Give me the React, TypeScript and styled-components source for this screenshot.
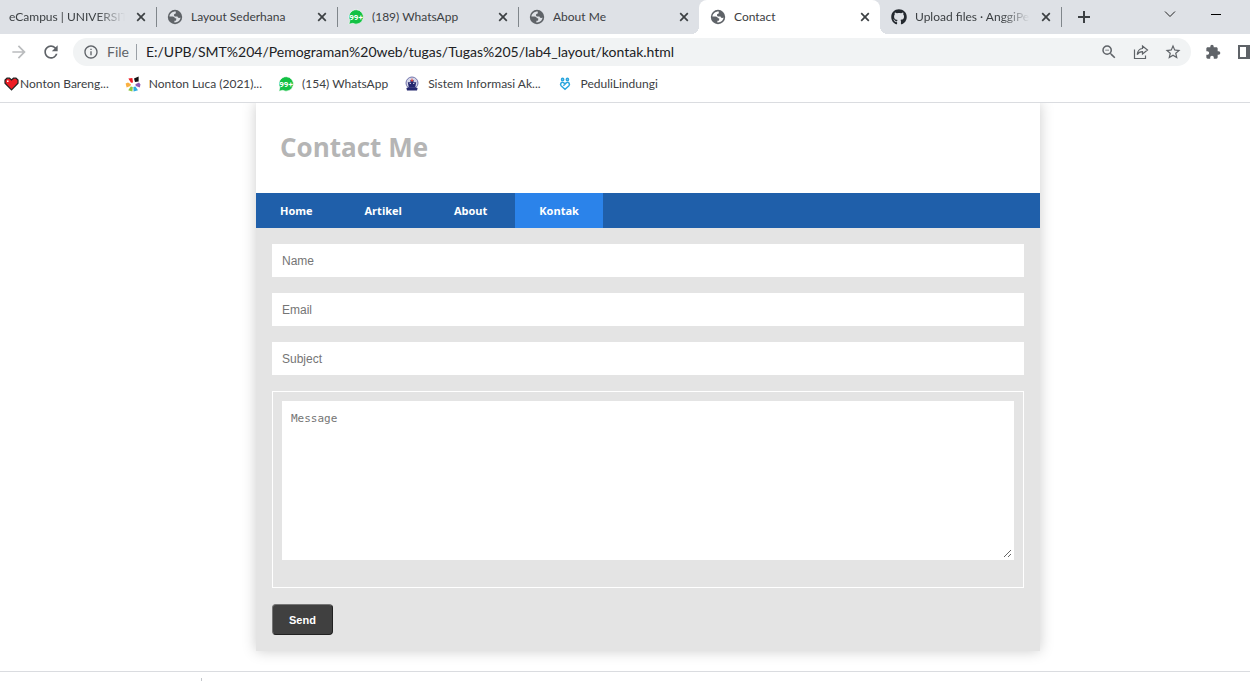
import React from "react";
import styled, { createGlobalStyle } from "styled-components";
import { MdRefresh, MdArrowForward, MdInfoOutline, MdExtension, MdStarBorder, MdZoomOut } from "react-icons/md";
import { FaGithub } from "react-icons/fa";

const siteFont = `"Open Sans", "Noto Sans", sans-serif`;
const chromeFont = `Lato, "Open Sans", sans-serif`;

const GlobalStyle = createGlobalStyle`
  * { box-sizing: border-box; }
  body { margin: 0; background: #fff; font-family: ${siteFont}; }
  button, input, textarea { margin: 0; }
`;

const Page = styled.div`
  min-height: 100vh;
  display: flex;
  flex-direction: column;
  overflow: hidden;
`;

const Chrome = styled.div`
  background: #fff;
  border-bottom: 1px solid #dadce0;
  font-family: ${chromeFont};
  font-size: 12px;
  color: #3c4043;
`;

const TabStrip = styled.div`
  display: flex;
  height: 34px;
  background: #dee1e6;
`;

const Tab = styled.div<{ $active?: boolean; $first?: boolean }>`
  position: relative;
  display: flex;
  align-items: center;
  gap: 8px;
  flex: 0 1 ${(p) => (p.$first ? 156 : 181)}px;
  min-width: 0;
  padding: 0 7px 0 ${(p) => (p.$first ? 9 : 11)}px;
  background: ${(p) => (p.$active ? "#fff" : "transparent")};
  border-radius: ${(p) => (p.$active ? "8px 8px 0 0" : "0")};
  &::before, &::after {
    content: "";
    display: ${(p) => (p.$active ? "block" : "none")};
    position: absolute;
    bottom: 0;
    width: 8px;
    height: 8px;
  }
  &::before { left: -8px; background: radial-gradient(circle at 0 0, transparent 8px, #fff 8px); }
  &::after { right: -8px; background: radial-gradient(circle at 100% 0, transparent 8px, #fff 8px); }
`;

const TabRule = styled.span`
  align-self: center;
  flex: none;
  width: 1px;
  height: 20px;
  margin-right: -1px;
  background: #80868b;
`;

const TabTitle = styled.span<{ $fade?: boolean }>`
  flex: 1;
  min-width: 0;
  overflow: hidden;
  white-space: nowrap;
  line-height: 18px;
  mask-image: ${(p) => (p.$fade ? "linear-gradient(to right, #000 75%, transparent)" : "none")};
`;

const IconButton = styled.button`
  display: flex;
  flex: none;
  align-items: center;
  justify-content: center;
  padding: 0;
  border: 0;
  background: none;
  color: #5f6368;
`;

const CloseButton = styled(IconButton)`
  width: 16px;
  height: 16px;
  color: #3c4043;
`;

const NewTab = styled(IconButton)`
  width: 28px;
  margin-left: 9px;
  color: #3c4043;
`;

const WindowControls = styled.div`
  display: flex;
  gap: 34px;
  margin-left: auto;
  padding: 8px 28px 0 0;
  align-items: flex-start;
`;

const Toolbar = styled.div`
  display: flex;
  align-items: center;
  height: 36px;
  padding-left: 9px;
  overflow: hidden;
`;

const NavButtons = styled.div`
  display: flex;
  flex: none;
  gap: 12px;
  width: 64px;
`;

const Omnibox = styled.div`
  display: flex;
  align-items: center;
  flex: 1;
  min-width: 0;
  height: 28px;
  padding: 0 9px 0 10px;
  border-radius: 14px;
  background: #f1f3f4;
  color: #5f6368;
`;

const Scheme = styled.span`
  margin-left: 8px;
  padding-right: 7px;
  border-right: 1px solid #9aa0a6;
  font-size: 14px;
  line-height: 16px;
`;

const UrlInput = styled.input`
  flex: 1;
  min-width: 0;
  padding: 0 0 0 9px;
  border: 0;
  outline: 0;
  background: none;
  color: #202124;
  font: 14px/20px ${chromeFont};
`;

const OmniActions = styled.div`
  display: flex;
  gap: 15px;
`;

const Extensions = styled.div`
  display: flex;
  flex: none;
  gap: 16px;
  width: 59px;
  padding-left: 14px;
`;

const Bookmarks = styled.nav`
  display: flex;
  align-items: center;
  gap: 16px;
  height: 32px;
  padding: 0 0 4px 4px;
`;

const Bookmark = styled.a<{ $tight?: boolean }>`
  display: flex;
  align-items: center;
  gap: ${(p) => (p.$tight ? 1 : 8)}px;
  color: #3c4043;
  line-height: 18px;
  text-decoration: none;
  white-space: nowrap;
`;

const Viewport = styled.main`
  flex: 1;
  padding: 0 0 20px 46px;
  overflow: hidden;
`;

const Container = styled.div`
  max-width: 784px;
  margin: 0 auto;
  background: #fff;
  box-shadow: 0 0 13px #ccc;
`;

const SiteHeader = styled.header`
  padding: 26px 24px 28px;
`;

const SiteTitle = styled.h1`
  margin: 0;
  color: #b5b5b5;
  font-size: 26px;
  line-height: 36px;
`;

const SiteNav = styled.nav`
  display: flex;
  gap: 4px;
  background: #1f5faa;
`;

const NavLink = styled.a<{ $active?: boolean }>`
  padding: 0 24px;
  background: ${(p) => (p.$active ? "#2b83ea" : "transparent")};
  color: #fff;
  font-size: 11px;
  font-weight: 700;
  line-height: 35px;
  text-decoration: none;
`;

const Form = styled.form`
  display: flex;
  flex-direction: column;
  gap: 16px;
  padding: 16px;
  background: #e4e4e4;
`;

const TextField = styled.input`
  width: 100%;
  height: 33px;
  padding: 0 9px;
  border: 1px solid #fff;
  background: #fff;
  font: 12px "Liberation Sans", Arial, sans-serif;
  &::placeholder { color: #757575; }
`;

const MessageFrame = styled.div`
  padding: 9px 9px 27px;
  border: 1px solid #fff;
`;

const MessageField = styled.textarea`
  display: block;
  width: 100%;
  height: 159px;
  padding: 8px 7px;
  border: 2px solid #fff;
  background: #fff;
  font: 11px/15px "DejaVu Sans Mono", monospace;
  &::placeholder { color: #757575; }
`;

const SendButton = styled.button`
  align-self: flex-start;
  height: 31px;
  padding: 0 16px;
  border: 1px solid;
  border-color: #767676 #212121 #212121 #767676;
  border-radius: 4px;
  background: #404040;
  color: #fff;
  font: bold 11px "Liberation Sans", Arial, sans-serif;
`;

const Shelf = styled.footer`
  height: 10px;
  padding: 6px 0 0 201px;
  border-top: 1px solid #dadce0;
`;

const ShelfRule = styled.div`
  width: 1px;
  height: 3px;
  background: #c4c7cb;
`;

const Globe = ({ land = "#dee1e6" }: { land?: string }) => (
  <svg width="16" height="16" viewBox="0 0 16 16" aria-hidden="true">
    <circle cx="8" cy="8" r="7.2" fill="#5f6368" />
    <path d="M8.8 2.4 C5.4 2.2 2.7 4.4 2.4 7.4 L5.6 7.5 Q7.7 7.6 7.9 9.2 H9.2 V10.9 Q9 11.8 7.4 11.8 V13.5 C10.8 13.8 13.4 11.2 13.5 8.6 Q12.6 9.4 11.4 8.8 Q10.6 8.3 10.5 7.4 H8 Q6.9 7.2 7 6 Q7 4.9 8.2 4.8 Q8.8 4.6 8.8 3.8 Z" fill={land} />
  </svg>
);

const WhatsApp = () => (
  <svg width="16" height="16" viewBox="0 0 16 16" aria-hidden="true">
    <path d="M8.2 .7a7.2 7.2 0 1 1-3.4 13.6L.9 15.2l1-3.8A7.2 7.2 0 0 1 8.2 .7z" fill="#12c144" stroke="#fff" strokeWidth="0.6" />
    <text x="8" y="11" textAnchor="middle" fontFamily="Liberation Sans Narrow, Roboto, sans-serif" fontSize="8" fontWeight="700" fill="#fff">99+</text>
  </svg>
);

const Heart = () => (
  <svg width="15" height="14" viewBox="0 0 15 14" aria-hidden="true">
    <path d="M7.5 12.8 L1 6.2 V3 L3 1.2 H5.5 L7.5 3 L9.5 1.2 H12 L14 3 V6.2 Z" fill="#ed1c24" stroke="#222" strokeWidth="1.2" />
    <path d="M3 3.5 h1.5 v1.5 h-1.5z" fill="#fff" />
  </svg>
);

const Pinwheel = () => (
  <svg width="16" height="16" viewBox="0 0 16 16" aria-hidden="true">
    <path d="M3.4 2.6 L7.4 2 L8 6.4 L6 6.8z" fill="#ed1c24" />
    <path d="M9 2.6 L13.6 .4 V5.4 L10 6z" fill="#111" />
    <path d="M.6 7.6 L3 6.4 L6 8.2 L5.4 10 L1.6 11.6z" fill="#fbb040" />
    <path d="M10.4 8.2 L14 6.4 L15.4 8.6 L14.8 11.4 L10.8 10z" fill="#8e5bb5" />
    <path d="M5.8 10.4 L7.8 11 L7.4 15.6 L3.2 14.2z" fill="#8cc63f" />
    <path d="M8.4 11 L10.4 10.4 L13 14.2 L8.6 15.6z" fill="#29abe2" />
  </svg>
);

const Crest = () => (
  <svg width="16" height="16" viewBox="0 0 16 16" aria-hidden="true">
    <circle cx="8" cy="7" r="6" fill="#d5d6e8" stroke="#7275ac" />
    <path d="M6.4 4h3.2v2.2h2.6l-1 5.4H4.8L3.8 6.2h2.6z" fill="#25286f" />
    <path d="M5.6 7.4h1.4M9 7.4h1.4" stroke="#d5d6e8" />
    <path d="M8 2.6v3.2M6.8 4.4h2.4" stroke="#e4473d" />
    <path d="M2.4 12l2.4-.8h6.4l2.4.8-.6 2.6H3z" fill="#25286f" />
  </svg>
);

const Peduli = () => (
  <svg width="16" height="16" viewBox="0 0 16 16" fill="none" stroke="#2ba6de" strokeWidth="1.5" aria-hidden="true">
    <circle cx="5.6" cy="3.4" r="1.1" />
    <circle cx="10.4" cy="3.4" r="1.1" />
    <path d="M8 8 L6.6 6.7 Q5 5.8 3.9 7.2 Q3 8.7 4.3 10 L8 13.3 L11.7 10 Q13 8.7 12.1 7.2 Q11 5.8 9.4 6.7 L6.4 9.7" />
  </svg>
);

const Share = () => (
  <svg width="16" height="16" viewBox="0 0 16 16" fill="none" stroke="currentColor" strokeWidth="1.2" aria-hidden="true">
    <path d="M1.5 5.5 V14.5 H12.5 V11.5" />
    <path d="M9.5 2 L14.5 6 L9.5 10 V7.7 Q6 7.7 4.2 10.6 Q4.8 5 9.5 4.5 Z" />
  </svg>
);

const Close = ({ label }: { label: string }) => (
  <CloseButton type="button" aria-label={`Close ${label}`}>
    <svg width="10" height="10" viewBox="0 0 10 10" stroke="currentColor" strokeWidth="1.7" aria-hidden="true">
      <path d="M1.2 1.2 L8.8 8.8 M8.8 1.2 L1.2 8.8" />
    </svg>
  </CloseButton>
);

const tabs = [
  { title: "eCampus | UNIVERSITA", icon: null, fade: true, first: true, line: true },
  { title: "Layout Sederhana", icon: <Globe />, line: true },
  { title: "(189) WhatsApp", icon: <WhatsApp />, line: true },
  { title: "About Me", icon: <Globe /> },
  { title: "Contact", icon: <Globe land="#fff" />, active: true },
  { title: "Upload files · AnggiPe", icon: <FaGithub size={16} color="#24292f" />, fade: true, line: true },
];

const bookmarks = [
  { title: "Nonton Bareng...", icon: <Heart />, tight: true },
  { title: "Nonton Luca (2021)...", icon: <Pinwheel /> },
  { title: "(154) WhatsApp", icon: <WhatsApp /> },
  { title: "Sistem Informasi Ak...", icon: <Crest /> },
  { title: "PeduliLindungi", icon: <Peduli /> },
];

export default function App() {
  return (
    <Page>
      <GlobalStyle />
      <Chrome>
        <TabStrip>
          {tabs.map((t) => (
            <React.Fragment key={t.title}>
              <Tab $active={t.active} $first={t.first}>
                {t.icon}
                <TabTitle $fade={t.fade}>{t.title}</TabTitle>
                <Close label={t.title} />
              </Tab>
              {t.line && <TabRule />}
            </React.Fragment>
          ))}
          <NewTab type="button" aria-label="New tab">
            <svg width="12" height="12" viewBox="0 0 12 12" fill="currentColor" aria-hidden="true"><path d="M5 0h2v5h5v2H7v5H5V7H0V5h5z" /></svg>
          </NewTab>
          <WindowControls>
            <IconButton type="button" aria-label="Search tabs">
              <svg width="12" height="12" viewBox="0 0 12 12" fill="none" stroke="#222"><path d="M1 3.5 L6 8.5 L11 3.5" /></svg>
            </IconButton>
            <IconButton type="button" aria-label="Minimize">
              <svg width="12" height="12" viewBox="0 0 12 12"><path d="M1 6h10v1H1z" fill="#000" /></svg>
            </IconButton>
          </WindowControls>
        </TabStrip>
        <Toolbar>
          <NavButtons>
            <IconButton type="button" aria-label="Forward" disabled><MdArrowForward size={20} color="#babcbe" /></IconButton>
            <IconButton type="button" aria-label="Reload"><MdRefresh size={20} /></IconButton>
          </NavButtons>
          <Omnibox>
            <MdInfoOutline size={16} />
            <Scheme>File</Scheme>
            <UrlInput aria-label="Address" defaultValue="E:/UPB/SMT%204/Pemograman%20web/tugas/Tugas%205/lab4_layout/kontak.html" />
            <OmniActions>
              <IconButton type="button" aria-label="Zoom"><MdZoomOut size={18} /></IconButton>
              <IconButton type="button" aria-label="Share"><Share /></IconButton>
              <IconButton type="button" aria-label="Bookmark"><MdStarBorder size={18} /></IconButton>
            </OmniActions>
          </Omnibox>
          <Extensions>
            <IconButton type="button" aria-label="Extensions"><MdExtension size={16} /></IconButton>
            <IconButton type="button" aria-label="Side panel">
              <svg width="16" height="16" viewBox="0 0 16 16"><path d="M1 1h14v14H1z M3 3v10h6V3z" fill="currentColor" fillRule="evenodd" /></svg>
            </IconButton>
          </Extensions>
        </Toolbar>
        <Bookmarks aria-label="Bookmarks">
          {bookmarks.map((b) => (
            <Bookmark key={b.title} href="#" $tight={b.tight}>{b.icon}<span>{b.title}</span></Bookmark>
          ))}
        </Bookmarks>
      </Chrome>
      <Viewport>
        <Container>
          <SiteHeader><SiteTitle>Contact Me</SiteTitle></SiteHeader>
          <SiteNav>
            <NavLink href="#">Home</NavLink>
            <NavLink href="#">Artikel</NavLink>
            <NavLink href="#">About</NavLink>
            <NavLink href="#" $active>Kontak</NavLink>
          </SiteNav>
          <Form onSubmit={(e) => e.preventDefault()}>
            <TextField type="text" placeholder="Name" aria-label="Name" />
            <TextField type="email" placeholder="Email" aria-label="Email" />
            <TextField type="text" placeholder="Subject" aria-label="Subject" />
            <MessageFrame><MessageField placeholder="Message" aria-label="Message" /></MessageFrame>
            <SendButton type="submit">Send</SendButton>
          </Form>
        </Container>
      </Viewport>
      <Shelf><ShelfRule /></Shelf>
    </Page>
  );
}
